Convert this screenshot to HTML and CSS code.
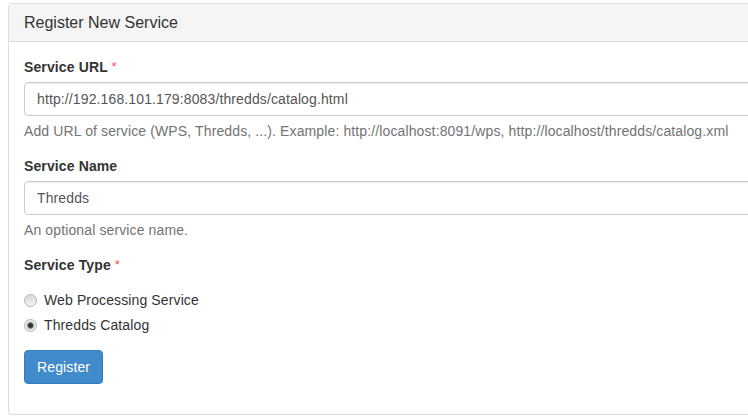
FILE: index.html
```html
<!DOCTYPE html>
<html lang="en">
<head>
<meta charset="utf-8">
<title>Register New Service</title>
<link rel="stylesheet" href="styles.css">
</head>
<body>
<div class="page">
  <div class="panel">
    <div class="panel-heading">
      <h3 class="panel-title">Register New Service</h3>
    </div>
    <div class="panel-body">
      <form class="form">
        <div class="form-group">
          <label class="control-label" for="url">Service URL <span class="req">*</span></label>
          <input class="form-control" id="url" type="text" value="http://192.168.101.179:8083/thredds/catalog.html">
          <p class="help-block">Add URL of service (WPS, Thredds, ...). Example: http://localhost:8091/wps, http://localhost/thredds/catalog.xml</p>
        </div>
        <div class="form-group">
          <label class="control-label" for="name">Service Name</label>
          <input class="form-control" id="name" type="text" value="Thredds">
          <p class="help-block">An optional service name.</p>
        </div>
        <div class="form-group">
          <label class="control-label">Service Type <span class="req">*</span></label>
          <div class="radio">
            <label class="radio-label"><input type="radio" name="type" value="wps"><span>Web Processing Service</span></label>
          </div>
          <div class="radio radio-next">
            <label class="radio-label"><input type="radio" name="type" value="thredds" checked><span>Thredds Catalog</span></label>
          </div>
        </div>
        <div class="form-group">
          <button type="button" class="btn btn-primary">Register</button>
        </div>
      </form>
    </div>
  </div>
</div>
</body>
</html>
```
FILE: styles.css
```css
html, body {
  margin: 0;
  padding: 0;
  background: #fff;
  overflow: hidden;
}
body {
  font-family: "Liberation Sans", Arial, Helvetica, sans-serif;
  font-size: 14px;
  line-height: 1.42857143;
  letter-spacing: 0.12px;
  color: #333;
}
.page {
  padding: 3px 0 0 8px;
}
.panel {
  width: 820px;
  background: #fff;
  border: 1px solid #ddd;
  border-radius: 4px;
  box-shadow: 0 1px 1px rgba(0, 0, 0, 0.05);
}
.panel-heading {
  padding: 10px 15px;
  background: #f5f5f5;
  border-bottom: 1px solid #ddd;
  border-top-left-radius: 3px;
  border-top-right-radius: 3px;
}
.panel-title {
  margin: 0;
  font-size: 16px;
  font-weight: 500;
  line-height: 17px;
  letter-spacing: 0;
  color: #333;
}
.panel-body {
  padding: 15px;
}
.form {
  margin: 0;
}
.form-group {
  margin-bottom: 15px;
}
.control-label {
  display: inline-block;
  max-width: 100%;
  margin-bottom: 5px;
  font-weight: bold;
}
.req {
  color: #ef4f4f;
  font-weight: normal;
  font-size: 13px;
  vertical-align: 1px;
}
.form-control {
  display: block;
  box-sizing: border-box;
  width: 100%;
  height: 34px;
  margin: 0;
  padding: 6px 12px;
  font-family: inherit;
  font-size: 14px;
  line-height: 1.42857143;
  letter-spacing: 0.12px;
  color: #555;
  background: #fff;
  border: 1px solid #ccc;
  border-radius: 4px;
  box-shadow: inset 0 1px 1px rgba(0, 0, 0, 0.075);
  outline: none;
}
.help-block {
  display: block;
  margin: 5px 0 10px;
  color: #737373;
}
.radio {
  margin: 10px 0;
}
.radio-next {
  margin-top: -5px;
}
.radio-label {
  display: flex;
  align-items: flex-start;
  min-height: 20px;
  font-weight: normal;
  cursor: pointer;
}
.radio-label input {
  appearance: none;
  -webkit-appearance: none;
  box-sizing: border-box;
  flex: none;
  width: 13px;
  height: 13px;
  margin: 4px 7px 0 0;
  border: 1px solid #b4b4b4;
  border-radius: 50%;
  background: linear-gradient(#dadada, #f3f3f3);
}
.radio-label input:checked {
  background: radial-gradient(circle, #333 0, #333 2px, #777 2.6px, #c8c8c8 3.6px, #ececec 4.5px);
}
.btn {
  display: inline-block;
  margin: 0;
  padding: 6px 12px;
  font-family: inherit;
  font-size: 14px;
  font-weight: normal;
  line-height: 1.42857143;
  letter-spacing: 0.12px;
  text-align: center;
  white-space: nowrap;
  border: 1px solid transparent;
  border-radius: 4px;
  cursor: pointer;
}
.btn-primary {
  color: #fff;
  background: #428bca;
  border-color: #357ebd;
}
```
